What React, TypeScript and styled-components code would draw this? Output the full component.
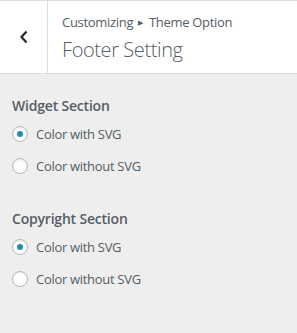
import React, { useState } from 'react'
import styled, { createGlobalStyle } from 'styled-components'

const GlobalStyle = createGlobalStyle`
  html, body {
    margin: 0;
    padding: 0;
    background: #eeeeee;
  }
  body {
    font-family: "Open Sans", "Noto Sans", sans-serif;
    color: #555d66;
  }
`

const Panel = styled.div`
  width: 297px;
  height: 333px;
  background: #eeeeee;
  box-sizing: border-box;
`

const Header = styled.div`
  display: flex;
  height: 74px;
  background: #fff;
  border-top: 1px solid #ddd;
  border-bottom: 1px solid #ddd;
  box-sizing: border-box;
`

const BackButton = styled.button`
  width: 48px;
  flex-shrink: 0;
  border: none;
  border-right: 1px solid #ddd;
  background: #fff;
  padding: 0;
  display: flex;
  align-items: center;
  justify-content: center;
  color: #23282d;
  cursor: pointer;
`

const Titles = styled.div`
  display: flex;
  flex-direction: column;
  padding: 11px 14px 0 14px;
`

const Breadcrumb = styled.span`
  font-size: 13px;
  line-height: 20px;
  letter-spacing: -0.3px;
  color: #555d66;
`

const Arrow = styled.span`
  font-size: 7px;
  margin: 0 6px 0 5px;
  position: relative;
  top: -2px;
`

const Title = styled.h3`
  margin: 2px 0 0;
  font-size: 20px;
  font-weight: 300;
  line-height: 26px;
  letter-spacing: -0.4px;
  color: #555d66;
`

const Body = styled.div`
  padding: 22px 12px;
  display: flex;
  flex-direction: column;
  gap: 27px;
`

const Section = styled.div`
  display: flex;
  flex-direction: column;
`

const SectionTitle = styled.span`
  font-size: 14px;
  font-weight: 600;
  line-height: 20px;
  letter-spacing: -0.2px;
  margin-bottom: 2px;
`

const Option = styled.label`
  display: flex;
  align-items: center;
  gap: 8px;
  height: 32px;
  font-size: 13px;
  letter-spacing: -0.3px;
  cursor: pointer;
`

const Radio = styled.span<{ checked: boolean }>`
  width: 16px;
  height: 16px;
  border-radius: 50%;
  border: 1px solid #b4b9be;
  background: #fff;
  box-shadow: inset 0 1px 2px rgba(0, 0, 0, 0.1);
  box-sizing: border-box;
  display: flex;
  align-items: center;
  justify-content: center;
  &::after {
    content: '';
    width: 6px;
    height: 6px;
    border-radius: 50%;
    background: #1e8cbe;
    display: ${p => (p.checked ? 'block' : 'none')};
  }
`

const options = ['Color with SVG', 'Color without SVG']

function RadioGroup({ title }: { title: string }) {
  const [value, setValue] = useState(0)
  return (
    <Section>
      <SectionTitle>{title}</SectionTitle>
      {options.map((o, i) => (
        <Option key={o} onClick={() => setValue(i)}>
          <Radio checked={value === i} />
          {o}
        </Option>
      ))}
    </Section>
  )
}

export default function App() {
  return (
    <Panel>
      <GlobalStyle />
      <Header>
        <BackButton aria-label="Back">
          <svg width="10" height="14" viewBox="0 0 10 14">
            <path d="M7.5 1.5 L2.5 7 L7.5 12.5" fill="none" stroke="currentColor" strokeWidth="2.2" />
          </svg>
        </BackButton>
        <Titles>
          <Breadcrumb>
            Customizing<Arrow>▶</Arrow>Theme Option
          </Breadcrumb>
          <Title>Footer Setting</Title>
        </Titles>
      </Header>
      <Body>
        <RadioGroup title="Widget Section" />
        <RadioGroup title="Copyright Section" />
      </Body>
    </Panel>
  )
}
